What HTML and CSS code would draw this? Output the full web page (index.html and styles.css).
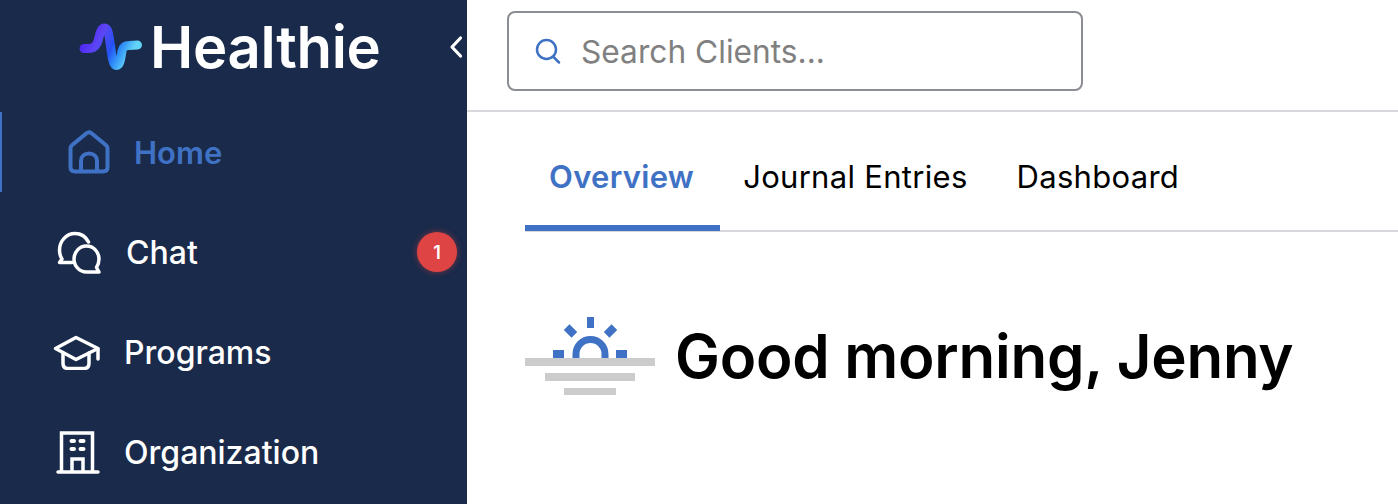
FILE: index.html
```html
<!DOCTYPE html>
<html lang="en">
<head>
  <meta charset="UTF-8">
  <title>Healthie</title>
  <link rel="stylesheet" href="styles.css">
</head>
<body>
  <div class="app">
    <aside class="sidebar">
      <div class="brand">
        <svg class="brand-mark" viewBox="0 0 64 48">
          <defs>
            <linearGradient id="pulse" x1="0" y1="0" x2="1" y2="0.35">
              <stop offset="0" stop-color="#4a1cf0"/>
              <stop offset="0.35" stop-color="#5d45f5"/>
              <stop offset="0.62" stop-color="#2452f5"/>
              <stop offset="0.78" stop-color="#2f8ef8"/>
              <stop offset="1" stop-color="#62d4f8"/>
            </linearGradient>
          </defs>
          <path d="M5 25.500C12 25.500 16.500 26 19 18C21 10 22 5 25.500 5C29.500 5 30 13 31.500 23C33 34 34 42.500 37.500 42.500C41.500 42.500 42 33 43 28C44 24 46 22.500 50 22.500L58.500 22" fill="none" stroke="url(#pulse)" stroke-width="9" stroke-linecap="round"/>
        </svg>
        <span class="brand-name">Healthie</span>
        <svg class="collapse" viewBox="0 0 14 24"><path d="M11.500 3L3 12L11.500 21" fill="none" stroke="#fff" stroke-width="3.200" stroke-linecap="round" stroke-linejoin="round"/></svg>
      </div>
      <nav class="nav">
        <a class="nav-item nav-home is-active">
          <svg class="nav-icon" width="42" height="44" viewBox="0 0 42 44"><path d="M2.500 18.500C2.500 17 3 16 4.200 15L18.500 3.200C20 2 22 2 23.500 3.200L37.800 15C39 16 39.500 17 39.500 18.500V37C39.500 40 38 41.500 35 41.500H7C4 41.500 2.500 40 2.500 37Z M13 41.500V31C13 26.500 16.500 23.500 21 23.500C25.500 23.500 29 26.500 29 31V41.500" fill="none" stroke="currentColor" stroke-width="4"/></svg>
          <span>Home</span>
        </a>
        <a class="nav-item nav-chat">
          <svg class="nav-icon" width="44" height="44" viewBox="0 0 44 44"><g fill="none" stroke="currentColor" stroke-width="3.500" stroke-linecap="round" stroke-linejoin="round"><path d="M15 32.500H2.500L5 29C3.300 26.500 2.500 23.500 2.500 20C2.500 11 9.500 3.500 18 3.500C24 3.500 29 7 31.500 12"/><path d="M42 42H29.500C22.500 42 17 36 17 29C17 22 22.500 16 29.500 16C36.500 16 42 22 42 29C42 32 41 35 39.500 37.500Z"/></g></svg>
          <span>Chat</span>
          <b class="badge">1</b>
        </a>
        <a class="nav-item nav-programs">
          <svg class="nav-icon" width="48" height="36" viewBox="0 0 48 36"><g fill="none" stroke="currentColor" stroke-width="3.500" stroke-linecap="round" stroke-linejoin="round"><path d="M2.500 14.500L23 3.500L45 14.500L23 25.500Z"/><path d="M10 19V29C10 32.500 12 34.500 15 34.500H31C34 34.500 36 32.500 36 29V19"/><path d="M45 15V25"/></g></svg>
          <span>Programs</span>
        </a>
        <a class="nav-item nav-org">
          <svg class="nav-icon" width="44" height="44" viewBox="0 0 44 44"><g fill="none" stroke="currentColor" stroke-width="3.500" stroke-linecap="round"><path d="M5.500 41V3H36.500V41"/><path d="M2 42H42"/><path d="M16 41V29H27V41"/><path d="M15.500 11H18M24.500 11H27.500M15.500 19H18M24.500 19H27.500" stroke-width="4"/></g></svg>
          <span>Organization</span>
        </a>
      </nav>
    </aside>

    <main class="content">
      <header class="topbar">
        <div class="search">
          <svg class="search-icon" width="28" height="28" viewBox="0 0 28 28"><g fill="none" stroke="#3f72c4" stroke-width="2.500" stroke-linecap="round"><circle cx="12.500" cy="12.500" r="9.500"/><path d="M19.500 20L25 25.500"/></g></svg>
          <span class="search-text">Search Clients...</span>
        </div>
      </header>

      <div class="tabs">
        <a class="tab is-active">Overview</a>
        <a class="tab">Journal Entries</a>
        <a class="tab">Dashboard</a>
      </div>

      <section class="greeting">
        <svg class="sun" width="130" height="78" viewBox="0 0 130 78">
          <g fill="#3f72c4">
            <rect x="62" y="0" width="7" height="11"/>
            <rect x="40" y="10" width="11" height="8" transform="rotate(45 45.500 14)"/>
            <rect x="80" y="10" width="11" height="8" transform="rotate(-45 85.500 14)"/>
            <rect x="28" y="33" width="11" height="8"/>
            <rect x="91" y="33" width="11" height="8"/>
          </g>
          <path d="M51 41V37A14.500 14.500 0 0 1 80 37V41" fill="none" stroke="#3f72c4" stroke-width="7"/>
          <g fill="#cccccc">
            <rect x="0" y="41" width="130" height="8"/>
            <rect x="20" y="56" width="90" height="8"/>
            <rect x="39" y="71" width="52" height="7"/>
          </g>
        </svg>
        <h1>Good morning, Jenny</h1>
      </section>
    </main>
  </div>
</body>
</html>
```

FILE: styles.css
```css
* {
  box-sizing: border-box;
  margin: 0;
  padding: 0;
}

html,
body {
  height: 504px;
  overflow: hidden;
}

body {
  font-family: Inter, "Liberation Sans", sans-serif;
  background: #fff;
  color: #000;
}

.app {
  display: flex;
  height: 504px;
}

.sidebar {
  width: 467px;
  flex-shrink: 0;
  background: #1a2a4a;
  color: #fff;
}

.brand {
  height: 102px;
  display: flex;
  align-items: center;
  padding: 0 4px 8px 79px;
}

.brand-mark {
  width: 64px;
  height: 48px;
  flex-shrink: 0;
}

.brand-name {
  margin-left: 7px;
  font-size: 58px;
  font-weight: 600;
  line-height: 1;
  letter-spacing: -0.3px;
}

.collapse {
  width: 14px;
  height: 24px;
  margin-left: auto;
}

.nav-item {
  position: relative;
  display: flex;
  align-items: center;
  height: 100px;
  font-size: 32px;
  font-weight: 500;
}

.nav-home {
  height: 80px;
  margin-top: 10px;
  margin-bottom: 10px;
  padding-left: 66px;
  gap: 24px;
  color: #3f72c4;
  font-size: 31px;
  font-weight: 600;
  border-left: 2px solid #3f72c4;
}

.nav-chat {
  padding-left: 57px;
  gap: 25px;
}

.nav-programs {
  padding-left: 53px;
  gap: 23px;
}

.nav-org {
  padding-left: 56px;
  gap: 24px;
}

.badge {
  position: absolute;
  top: 30px;
  right: 10px;
  width: 40px;
  height: 40px;
  border-radius: 50%;
  background: #de4444;
  box-shadow: 0 0 6px rgba(222, 68, 68, 0.5);
  display: flex;
  align-items: center;
  justify-content: center;
  font-size: 18px;
  font-weight: 600;
}

.content {
  flex: 1;
  min-width: 0;
}

.topbar {
  height: 112px;
  padding: 11px 40px 0;
  border-bottom: 2px solid #d8d8dc;
}

.search {
  width: 576px;
  height: 80px;
  border: 2px solid #8a8d91;
  border-radius: 8px;
  display: flex;
  align-items: center;
  padding-left: 25px;
  gap: 19px;
}

.search-text {
  font-size: 31.700px;
  color: #808080;
}

.tabs {
  display: flex;
  height: 120px;
  margin-left: 58px;
  border-bottom: 2px solid #d8d8dc;
}

.tab {
  display: flex;
  align-items: center;
  height: 119px;
  padding: 10px 26px 0 23px;
  font-size: 31px;
  letter-spacing: 0.3px;
}

.tab.is-active {
  color: #3f72c4;
  font-weight: 600;
  border-bottom: 6px solid #3f72c4;
  padding: 16px 26px 0 24px;
}

.greeting {
  display: flex;
  align-items: center;
  gap: 20px;
  margin: 85px 0 0 58px;
}

.greeting h1 {
  font-size: 60px;
  font-weight: 600;
  line-height: 78px;
  letter-spacing: -0.25px;
}
```
